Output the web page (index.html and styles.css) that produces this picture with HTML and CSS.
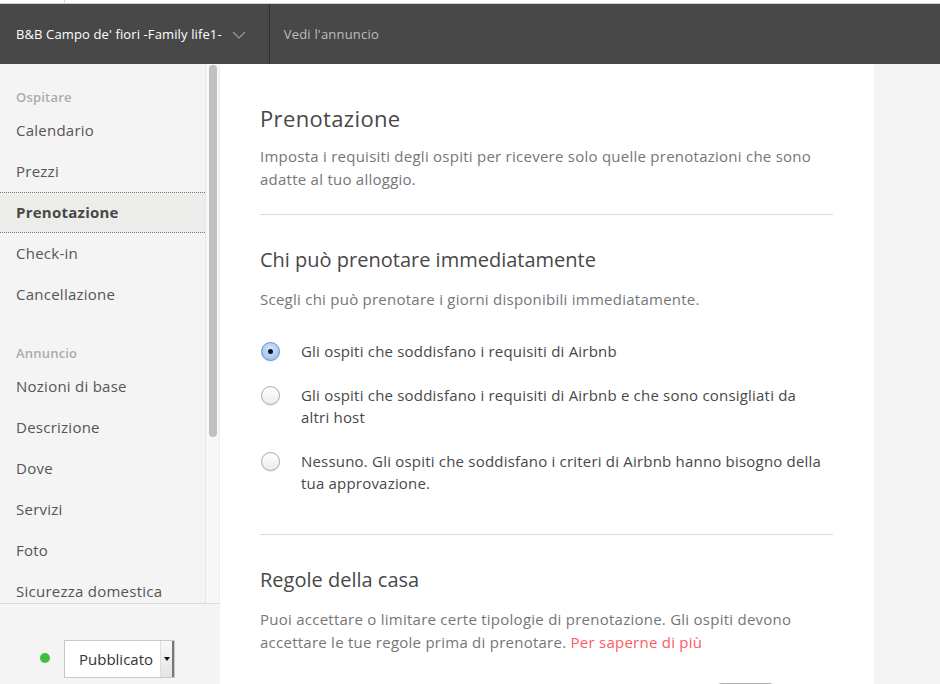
FILE: index.html
```html
<!DOCTYPE html>
<html lang="it">
<head>
  <meta charset="UTF-8">
  <title>Prenotazione - Gestisci annuncio</title>
  <link rel="stylesheet" href="styles.css">
</head>
<body>
  <div class="topstrip"><span class="tick"></span></div>

  <header class="topbar">
    <div class="listing-pick">
      B&amp;B Campo de' fiori -Family life1-
      <svg class="chev" width="14" height="8" viewBox="0 0 14 8"><path d="M1 1 L7 7 L13 1" fill="none" stroke="#9a9a9a" stroke-width="1.2"/></svg>
    </div>
    <a class="view-link" href="#">Vedi l'annuncio</a>
  </header>

  <div class="layout">
    <aside class="sidebar">
      <div class="side-top">
        <nav class="side-nav">
          <div class="side-group">Ospitare</div>
          <a class="side-item" href="#">Calendario</a>
          <a class="side-item" href="#">Prezzi</a>
          <a class="side-item active" href="#">Prenotazione</a>
          <a class="side-item" href="#">Check-in</a>
          <a class="side-item" href="#">Cancellazione</a>

          <div class="side-group">Annuncio</div>
          <a class="side-item" href="#">Nozioni di base</a>
          <a class="side-item" href="#">Descrizione</a>
          <a class="side-item" href="#">Dove</a>
          <a class="side-item" href="#">Servizi</a>
          <a class="side-item" href="#">Foto</a>
          <a class="side-item" href="#">Sicurezza domestica</a>
        </nav>
        <div class="scroll-track"><div class="scroll-thumb"></div></div>
      </div>
      <div class="side-status">
        <span class="dot"></span>
        <div class="status-select">
          <span>Pubblicato</span>
          <span class="caret"></span>
        </div>
      </div>
    </aside>

    <main class="main">
      <section class="panel">
        <h1>Prenotazione</h1>
        <p class="lead">Imposta i requisiti degli ospiti per ricevere solo quelle prenotazioni che sono adatte al tuo alloggio.</p>

        <hr>

        <h2>Chi può prenotare immediatamente</h2>
        <p class="lead">Scegli chi può prenotare i giorni disponibili immediatamente.</p>

        <div class="options">
          <label class="option">
            <span class="radio checked"></span>
            <span class="opt-text">Gli ospiti che soddisfano i requisiti di Airbnb</span>
          </label>
          <label class="option">
            <span class="radio"></span>
            <span class="opt-text">Gli ospiti che soddisfano i requisiti di Airbnb e che sono consigliati da altri host</span>
          </label>
          <label class="option">
            <span class="radio"></span>
            <span class="opt-text">Nessuno. Gli ospiti che soddisfano i criteri di Airbnb hanno bisogno della tua approvazione.</span>
          </label>
        </div>

        <hr class="wide">

        <h2>Regole della casa</h2>
        <p class="lead">Puoi accettare o limitare certe tipologie di prenotazione. Gli ospiti devono accettare le tue regole prima di prenotare. <a class="more" href="#">Per saperne di più</a></p>

        <div class="rule-row">
          <span class="rule-toggle" aria-label="Adatto ai bambini"></span>
        </div>
      </section>
    </main>
  </div>
</body>
</html>
```

FILE: styles.css
```css
* {
  box-sizing: border-box;
}
html, body {
  margin: 0;
  height: 100%;
  overflow: hidden;
}
body {
  font-family: "Open Sans", "Liberation Sans", sans-serif;
  color: #484848;
  background: #f4f4f4;
  letter-spacing: 0.2px;
}
a {
  text-decoration: none;
  color: inherit;
}

.topstrip {
  height: 4px;
  background: #fff;
  border-bottom: 1px solid #cfcfcf;
  padding-left: 64px;
}
.tick {
  display: block;
  width: 1px;
  height: 3px;
  background: #d4d4d4;
}

.topbar {
  height: 60px;
  background: #484848;
  display: flex;
  align-items: stretch;
}
.listing-pick {
  display: flex;
  align-items: center;
  gap: 10px;
  padding: 0 23px 0 16px;
  color: #fff;
  font-size: 13px;
  letter-spacing: 0.12px;
  border-right: 1px solid #2f2f2f;
}
.chev {
  margin-top: 1px;
}
.view-link {
  display: flex;
  align-items: center;
  padding-left: 14px;
  color: #bdbdbd;
  font-size: 13px;
}

.layout {
  display: flex;
  height: 620px;
}

.sidebar {
  width: 220px;
  flex: none;
  display: flex;
  flex-direction: column;
  background: #f4f4f4;
}
.side-top {
  height: 540px;
  display: flex;
  overflow: hidden;
  border-bottom: 1px solid #dcdcdc;
}
.side-nav {
  width: 205px;
  flex: none;
  padding-top: 22px;
}
.scroll-track {
  width: 15px;
  background: #f7f7f7;
  border-left: 1px solid #e6e6e6;
  border-right: 1px solid #ededed;
  padding: 1px 2px 0 3px;
}
.scroll-thumb {
  height: 372px;
  background: #c1c1c1;
  border-radius: 5px;
}
.side-group {
  padding: 0 16px;
  font-size: 13px;
  font-weight: 600;
  color: #ababab;
  line-height: 22px;
  margin-bottom: 2px;
}
.side-item {
  display: block;
  padding: 0 16px;
  height: 41px;
  line-height: 41px;
  font-size: 15px;
  letter-spacing: 0.25px;
  color: #555;
}
.side-item:nth-of-type(5) {
  margin-bottom: 27px;
}
.side-item.active {
  font-weight: 700;
  color: #484848;
  background: #ecedea;
  border-top: 1px dotted #777;
  border-bottom: 1px dotted #777;
  line-height: 39px;
}

.side-status {
  flex: 1;
  display: flex;
  align-items: flex-start;
  padding: 36px 0 0 40px;
  gap: 14px;
}
.dot {
  width: 10px;
  height: 10px;
  margin-top: 13px;
  border-radius: 50%;
  background: #3fbf3f;
}
.status-select {
  width: 111px;
  height: 38px;
  display: flex;
  align-items: center;
  justify-content: space-between;
  background: #fff;
  border: 1px solid #c8c8c8;
  font-size: 15px;
  letter-spacing: 0;
  color: #333;
  padding-left: 14px;
}
.caret {
  width: 14px;
  height: 100%;
  border-left: 1px solid #ddd;
  border-right: 2px solid #777;
  background: linear-gradient(#f8f8f8, #e4e4e4);
  position: relative;
}
.caret::after {
  content: "";
  position: absolute;
  left: 3px;
  top: 16px;
  border: 3px solid transparent;
  border-top: 4px solid #111;
}

.main {
  flex: 1;
  overflow: hidden;
  background: #f4f4f4;
}
.panel {
  width: 654px;
  min-height: 100%;
  background: #fff;
  padding: 40px 41px 40px 40px;
}
h1 {
  margin: 0;
  font-size: 22px;
  font-weight: 400;
  line-height: 28px;
  letter-spacing: 0.35px;
  color: #484848;
}
h2 {
  margin: 32px 0 0;
  font-size: 20px;
  font-weight: 400;
  line-height: 26px;
  letter-spacing: 0;
  color: #484848;
}
.lead {
  margin: 13px 0 0;
  font-size: 15px;
  line-height: 23px;
  letter-spacing: 0.25px;
  color: #767676;
}
h2 + .lead {
  margin-top: 15px;
}
hr {
  border: 0;
  border-top: 1px solid #dcdcdc;
  margin: 23px 0 0;
}
hr.wide {
  margin-top: 40px;
}
.more {
  color: #ff5a5f;
}

.options {
  display: flex;
  flex-direction: column;
  gap: 22px;
  margin-top: 29px;
}
.option {
  display: flex;
  align-items: flex-start;
  gap: 21px;
  font-size: 15px;
  line-height: 22px;
  color: #484848;
}
.opt-text {
  max-width: 527px;
}
.radio {
  flex: none;
  width: 19px;
  height: 19px;
  margin-top: 2px;
  margin-left: 1px;
  border-radius: 50%;
  border: 1px solid #a9a9a9;
  background: linear-gradient(#ffffff, #ececec);
  box-shadow: 0 1px 1px rgba(0,0,0,0.08);
  position: relative;
}
.radio.checked {
  border-color: #6d8fc8;
  background: radial-gradient(circle at 50% 35%, #d4e6fb, #8fb7ef);
}
.radio.checked::after {
  content: "";
  position: absolute;
  left: 6px;
  top: 6px;
  width: 5px;
  height: 5px;
  border-radius: 50%;
  background: #111;
}

.rule-row {
  display: flex;
  justify-content: flex-end;
  margin-top: 29px;
}
.rule-toggle {
  width: 57px;
  height: 40px;
  margin-right: 59px;
  border: 1px solid #b0b0b0;
  border-radius: 4px;
}
```
